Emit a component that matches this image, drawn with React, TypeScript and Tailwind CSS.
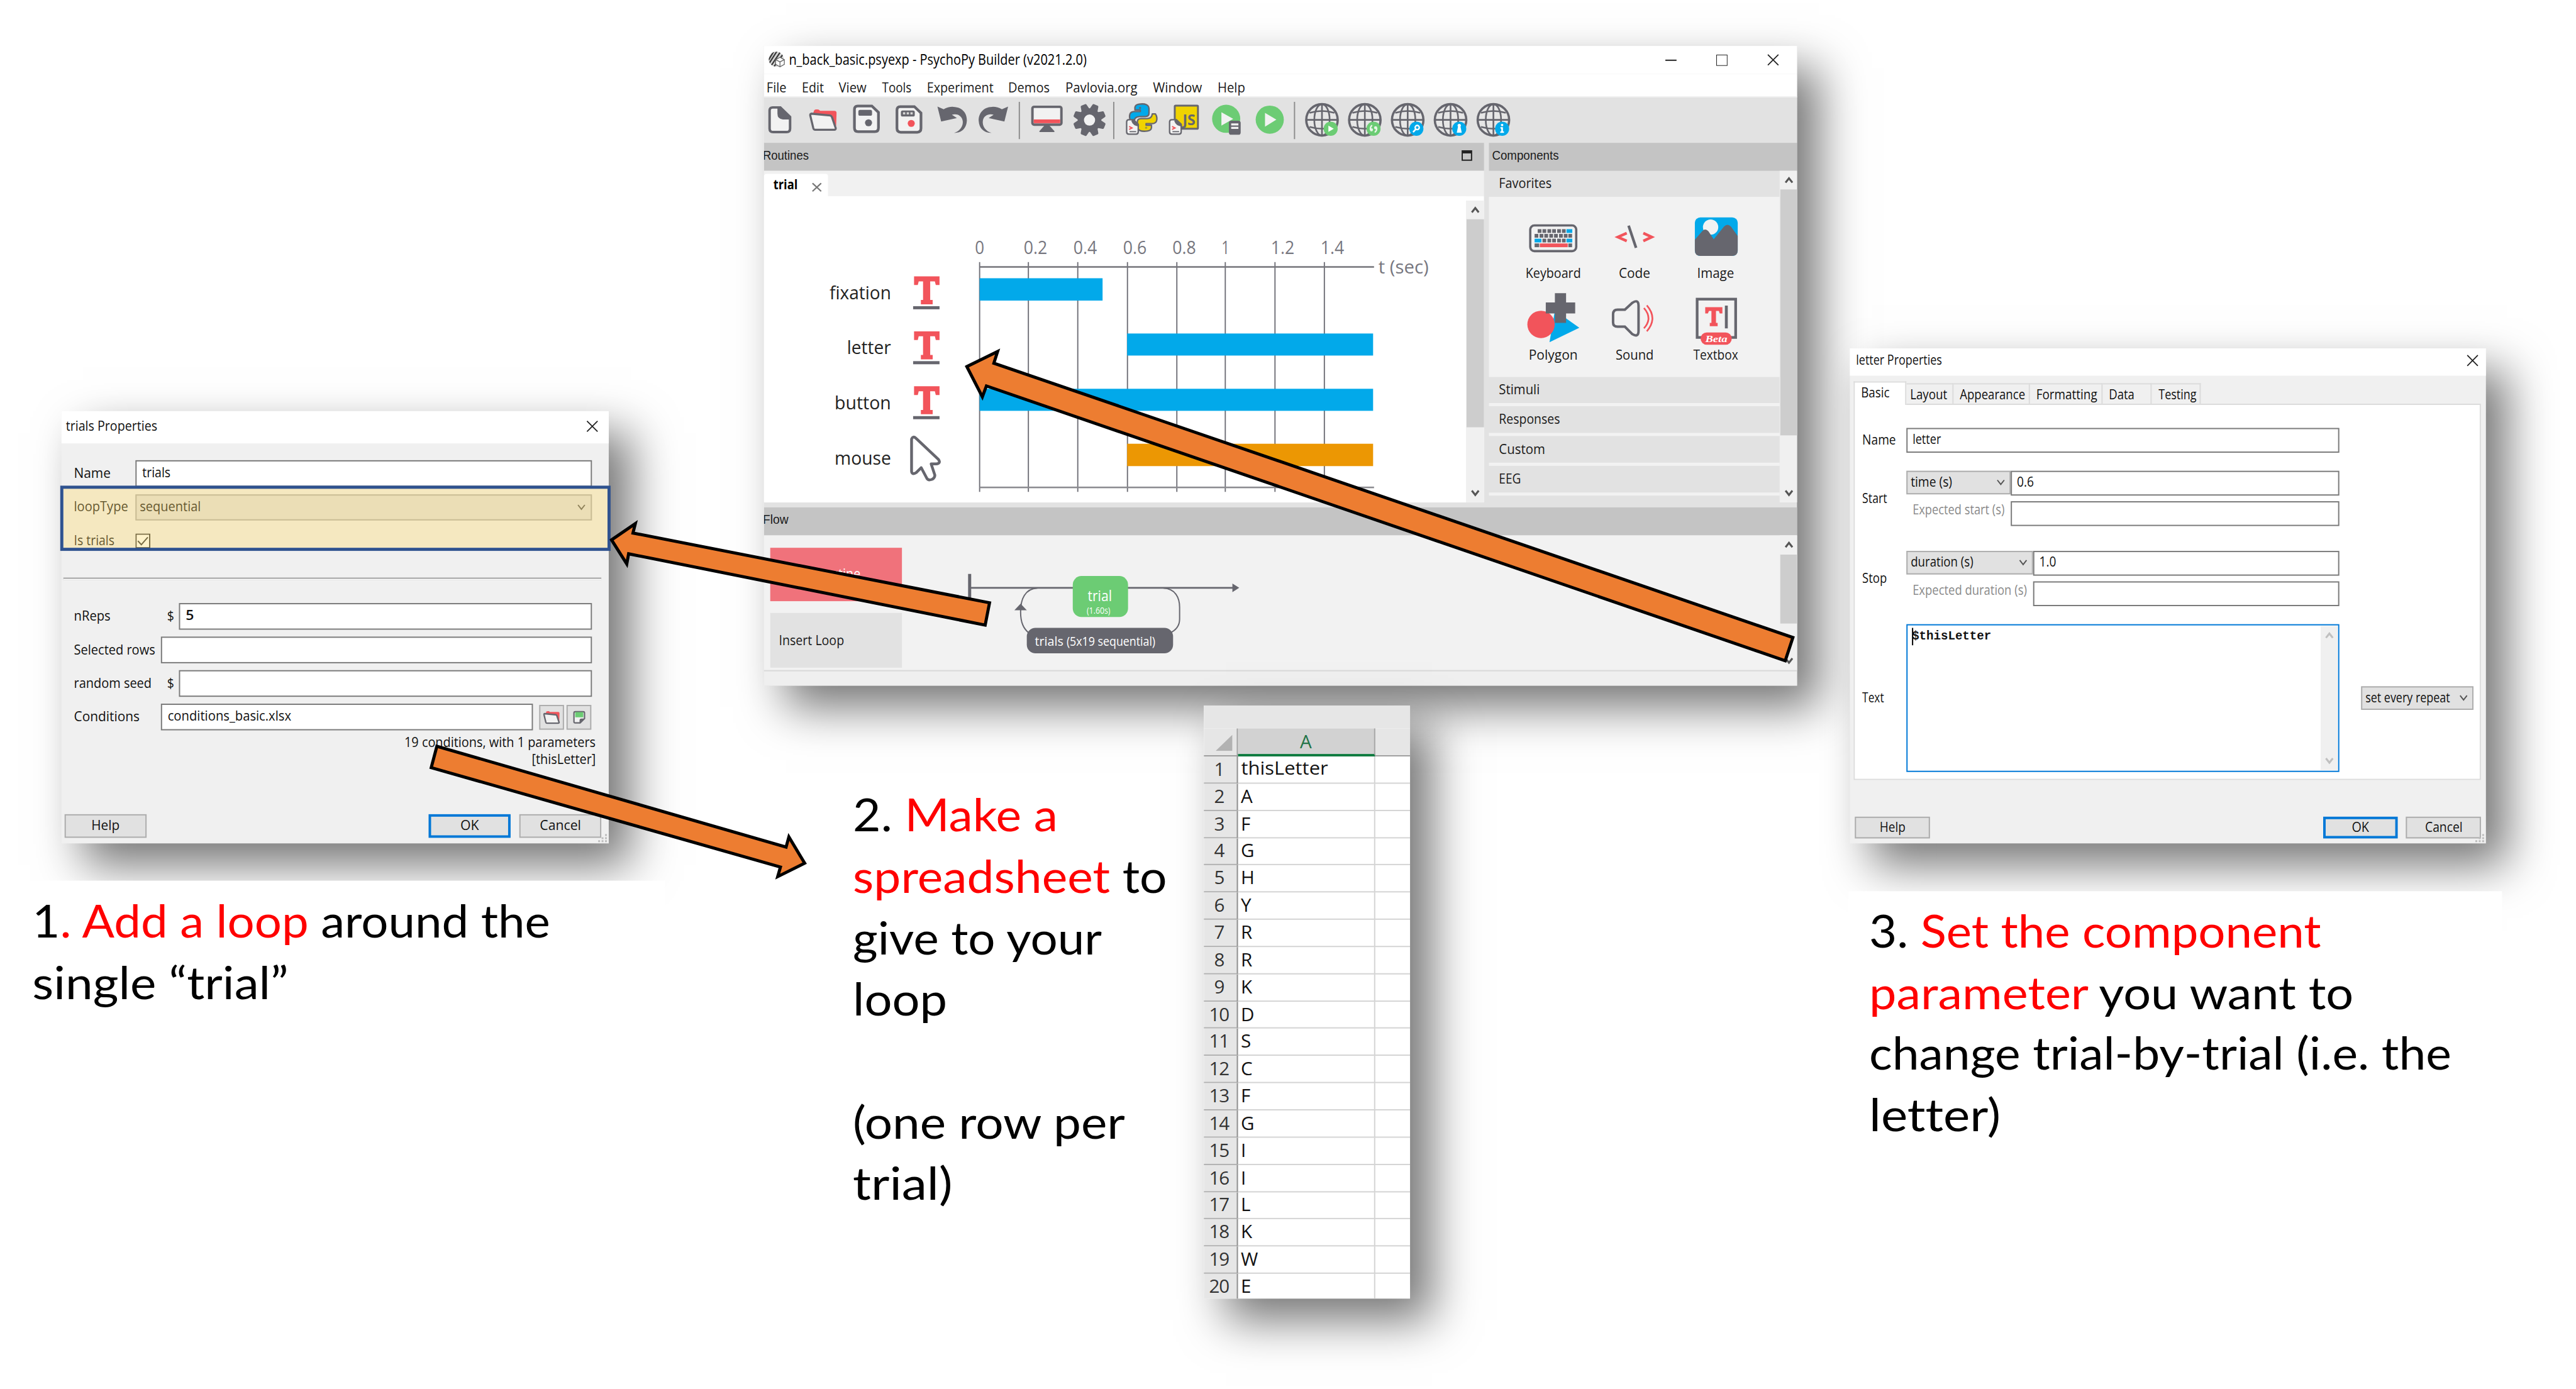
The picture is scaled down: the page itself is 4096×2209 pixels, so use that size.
import { useLayoutEffect, useRef, useState } from "react";
import type { ReactNode } from "react";

const DARK = "#66666e";
const RED = "#f2545b";
const BLUE = "#02a9ea";
const GREEN = "#6ccc74";
const PAPER = "#f2f2f2";
const YELLOW = "#f0d300";

/* Text whose glyphs are stretched or squeezed to an exact width. */
function Fit({ w, children, className = "" }: { w: number; children: ReactNode; className?: string }) {
  const ref = useRef<HTMLSpanElement>(null);
  const [k, setK] = useState(1);
  useLayoutEffect(() => {
    if (ref.current && ref.current.offsetWidth > 0) setK(w / ref.current.offsetWidth);
  }, [w]);
  return (
    <span className={"inline-block shrink-0 whitespace-pre " + className} style={{ width: w }}>
      <span ref={ref} className="inline-block origin-left whitespace-pre" style={{ transform: `translateY(-1.5px) scaleX(${k})` }}>
        {children}
      </span>
    </span>
  );
}

function CloseX() {
  return (
    <svg className="h-[19px] w-[19px]" viewBox="0 0 19 19">
      <path d="M1 1L18 18M18 1L1 18" stroke="#222" strokeWidth="1.8" fill="none" />
    </svg>
  );
}

function Chevron({ color = "#555", up = false, bold = false }: { color?: string; up?: boolean; bold?: boolean }) {
  return (
    <svg className="h-[12px] w-[14px] shrink-0" viewBox="0 0 14 12">
      <path
        d={up ? "M1.5 10L7 3L12.5 10" : "M1.5 2L7 9L12.5 2"}
        stroke={color}
        strokeWidth={bold ? 3.2 : 2}
        fill="none"
      />
    </svg>
  );
}

/* ---------- toolbar ---------- */

function ToolIcon({ x, oy = 6, children }: { x: number; oy?: number; children: ReactNode }) {
  return (
    <svg className="h-[73px] w-[69.2px] shrink-0" viewBox={`${x} ${oy} 207.6 219`}>
      {children}
    </svg>
  );
}

function Separator() {
  return (
    <div className="flex h-[60px] w-[14px] shrink-0 justify-center pr-[5px]">
      <div className="w-[2px] bg-[#8e8e8e]" />
    </div>
  );
}

function ScriptPage({ dx = 0 }: { dx?: number }) {
  return (
    <g transform={`translate(${dx} 0)`}>
      <path d="M293 113H315L338 135V172Q338 183 327 183H293Q282 183 282 172V124Q282 113 293 113Z" fill={PAPER} stroke={DARK} strokeWidth="7" />
      <path d="M310 110L342 138V146Q312 144 305 120Z" fill={DARK} />
      <path d="M294 146L308 153L294 160" fill="none" stroke={RED} strokeWidth="6" />
      <path d="M296 171H328" stroke={DARK} strokeWidth="5" />
    </g>
  );
}

function Globe({ n, badge, children }: { n: number; badge: string; children: ReactNode }) {
  return (
    <ToolIcon x={1121.4}>
      <g data-slot={n} fill="none" stroke={DARK}>
        <circle cx="1224" cy="114" r="76" strokeWidth="11" fill="#e6e6e6" />
        <ellipse cx="1224" cy="114" rx="37" ry="76" strokeWidth="8" />
        <path d="M1224 38V190M1148 114H1300" strokeWidth="8" />
        <path d="M1164 80Q1224 62 1284 80M1164 148Q1224 166 1284 148" strokeWidth="8" />
      </g>
      <circle cx="1266" cy="157" r="34" fill={badge} />
      {children}
    </ToolIcon>
  );
}

const PY = "M342 38Q389 32 390 60V82Q390 98 372 98H344Q320 99 318 121H303Q292 104 298 86Q302 75 318 74H348V66H322V54Q324 40 342 38Z";

function Toolbar() {
  const disk = "M452 287H520L552 318V392Q552 411 534 411H454Q436 411 436 392V304Q436 287 452 287Z";
  const undo =
    "M838 290L868 303Q890 290 915 291C960 292 982 325 980 360C978 395 955 418 918 417C945 410 964 385 960 358C956 333 932 322 908 329L932 345L856 362Z";
  return (
    <div className="flex h-[73px] items-center overflow-hidden bg-[#e2e2e2]">
      <div className="-ml-[8.6px] flex items-center">
        <ToolIcon x={-25.8} oy={246}>
          <path d="M43 294H80L127 340V396Q127 413 110 413H45Q28 413 28 396V309Q28 294 43 294Z" fill={PAPER} stroke={DARK} strokeWidth="12" />
          <path d="M66 290H82L132 338V352H92Q66 350 66 325Z" fill={DARK} />
        </ToolIcon>
        <ToolIcon x={181.8} oy={246}>
          <path d="M236 322L241 308Q244 302 262 304L270 310H338Q350 310 349 322L347 385L320 330Z" fill={RED} />
          <path d="M227 324L318 333Q324 334 327 341L345 394Q346 402 338 402H246Q239 402 237 395L222 333Q221 325 227 324Z" fill={PAPER} stroke={DARK} strokeWidth="10" />
        </ToolIcon>
        <ToolIcon x={389.4} oy={246}>
          <path d={disk} fill={PAPER} stroke={DARK} strokeWidth="13" />
          <rect x="455" y="306" width="66" height="28" rx="8" fill={DARK} />
          <circle cx="504" cy="368" r="17" fill={DARK} />
        </ToolIcon>
        <ToolIcon x={597} oy={246}>
          <path d={disk} transform="translate(206 3)" fill={PAPER} stroke={DARK} strokeWidth="13" />
          <rect x="661" y="309" width="67" height="29" rx="8" fill={DARK} />
          <path d="M671 317h11v11h-11zM689 317h11v11h-11zM707 317h11v11h-11z" fill="#d5d5d5" />
          <circle cx="711" cy="371" r="17" fill={RED} />
        </ToolIcon>
        <ToolIcon x={804.6} oy={246}>
          <path d={undo} fill={DARK} />
        </ToolIcon>
        <ToolIcon x={1012.2} oy={246}>
          <path d={undo} transform="translate(2018 0) scale(-1 1)" fill={DARK} />
        </ToolIcon>
        <Separator />
        <ToolIcon x={1261.8} oy={246}>
          <rect x="1295" y="291" width="140" height="86" rx="8" fill={PAPER} stroke={DARK} strokeWidth="12" />
          <rect x="1301" y="352" width="128" height="18" fill={RED} />
          <path d="M1354 380H1376L1401 408V413H1329V408Z" fill={DARK} />
        </ToolIcon>
        <ToolIcon x={-1}>
          <g fill={DARK}>
            <circle cx="101" cy="115" r="57" />
            {[22.5, 67.5, 112.5, 157.5, 202.5, 247.5, 292.5, 337.5].map((a) => (
              <path key={a} transform={`rotate(${a} 101 115)`} d="M80 68L86 40Q87 36 92 36H110Q115 36 116 40L122 68Z" />
            ))}
          </g>
          <circle cx="101" cy="115" r="27" fill={PAPER} />
        </ToolIcon>
        <Separator />
        <ToolIcon x={249.8}>
          <g stroke={DARK} strokeWidth="7" strokeLinejoin="round">
            <path d={PY} fill={BLUE} />
            <path d={PY} fill={YELLOW} transform="rotate(180 362 103)" />
          </g>
          <circle cx="347" cy="56" r="5" fill={DARK} />
          <circle cx="376" cy="152" r="5" fill="#a59a30" />
          <ScriptPage />
        </ToolIcon>
        <ToolIcon x={457.4}>
          <rect x="515" y="45" width="112" height="112" rx="4" fill={YELLOW} stroke={DARK} strokeWidth="9" />
          <text x="553" y="139" textLength="62" lengthAdjust="spacingAndGlyphs" fontFamily="Open Sans, sans-serif" fontWeight="700" fontSize="68" fill={DARK}>
            JS
          </text>
          <ScriptPage dx={208} />
        </ToolIcon>
        <ToolIcon x={665}>
          <circle cx="764" cy="109" r="68" fill={GREEN} />
          <path d="M741 77L798 109L741 142Z" fill={PAPER} />
          <rect x="777" y="118" width="57" height="68" rx="11" fill={DARK} />
          <path d="M788 131h35v10h-35zM788 148h35v10h-35z" fill={PAPER} />
        </ToolIcon>
        <ToolIcon x={872.6}>
          <circle cx="975" cy="113" r="68" fill={GREEN} />
          <path d="M952 80L1007 113L952 147Z" fill={PAPER} />
        </ToolIcon>
        <Separator />
        <Globe n={1} badge={GREEN}>
          <path d="M1255 142L1281 157L1255 172Z" fill="#fff" />
        </Globe>
        <Globe n={2} badge={GREEN}>
          <g fill="none" stroke="#e8f6e8" strokeWidth="7" strokeLinecap="round">
            <circle cx="1256" cy="162" r="4" />
            <path d="M1251 160Q1250 148 1257 142" />
            <circle cx="1276" cy="152" r="4" />
            <path d="M1281 154Q1282 166 1274 172" />
          </g>
        </Globe>
        <Globe n={3} badge={BLUE}>
          <circle cx="1270" cy="151" r="10" fill="none" stroke="#fff" strokeWidth="7" />
          <path d="M1262 160L1250 173" stroke="#fff" strokeWidth="8" />
        </Globe>
        <Globe n={4} badge={BLUE}>
          <circle cx="1266" cy="141" r="8" fill="#fff" />
          <path d="M1260 147H1272L1278 176H1254Z" fill="#fff" />
        </Globe>
        <Globe n={5} badge={BLUE}>
          <circle cx="1266" cy="139" r="6" fill="#fff" />
          <path d="M1258 149H1270V170H1275V177H1257V170H1262V156H1258Z" fill="#fff" />
        </Globe>
      </div>
    </div>
  );
}

/* ---------- scroll bars ---------- */

function ScrollBar({ top, thumb, className = "" }: { top: number; thumb: number; className?: string }) {
  return (
    <div className={"flex shrink-0 flex-col bg-[#f0f0f0] pl-[1px] " + className}>
      <div className="flex shrink-0 items-center justify-center" style={{ height: top }}>
        <Chevron up bold />
      </div>
      <div className="shrink-0 bg-[#cdcdcd]" style={{ height: thumb }} />
      <div className="flex flex-1 items-end justify-center pb-[9px]">
        <Chevron bold />
      </div>
    </div>
  );
}

/* ---------- routine time line ---------- */

const TICKS = [
  { x: 1577, tx: 1577, w: 15, t: "0" },
  { x: 1655.5, tx: 1667, w: 38, t: "0.2" },
  { x: 1735, tx: 1747, w: 38, t: "0.4" },
  { x: 1815, tx: 1827, w: 38, t: "0.6" },
  { x: 1894.5, tx: 1906.5, w: 38, t: "0.8" },
  { x: 1972.5, tx: 1973, w: 13, t: "1" },
  { x: 2052.5, tx: 2065, w: 38, t: "1.2" },
  { x: 2132, tx: 2145, w: 38, t: "1.4" },
];

const BARS = [
  { x: 1577, w: 198, y: 448, h: 36, c: BLUE },
  { x: 1814.5, w: 396, y: 537, h: 35.5, c: BLUE },
  { x: 1577, w: 633.5, y: 626, h: 35.5, c: BLUE },
  { x: 1814.5, w: 396, y: 714.5, h: 36, c: "#ec9703" },
];

const ROWS = [
  { t: "fixation", w: 99, y: 482 },
  { t: "letter", w: 71, y: 570.5 },
  { t: "button", w: 91, y: 659 },
  { t: "mouse", w: 91, y: 748 },
];

function TextGlyph({ y }: { y: number }) {
  return (
    <g transform={`translate(0 ${y})`}>
      <path d="M1471.500 0H1512.500V14H1506.500L1505 8H1497.500V38H1501.500V45H1482.500V38H1486V8H1479L1477.500 14H1471.500Z" fill={RED} />
      <rect x="1470" y="48" width="42.500" height="5" fill={DARK} />
    </g>
  );
}

function Timeline() {
  return (
    <svg className="h-[493px] w-[1130px] shrink-0 bg-white" viewBox="1230 316 1130 493" fontFamily="Open Sans, sans-serif">
      {TICKS.map((k) => (
        <g key={k.t}>
          <rect x={k.x - 0.9} y="422" width="1.900" height="370" fill="#6e6e76" />
          <text x={k.tx - k.w / 2} y="409.500" textLength={k.w} lengthAdjust="spacingAndGlyphs" fontSize="30" fill="#77777f">
            {k.t}
          </text>
        </g>
      ))}
      <rect x="1577" y="428.500" width="635" height="2.600" fill="#77777d" />
      <rect x="1577" y="783.500" width="635" height="2.600" fill="#8b8b90" />
      {BARS.map((b) => (
        <rect key={b.y} x={b.x} y={b.y} width={b.w} height={b.h} fill={b.c} />
      ))}
      <text x="2219" y="440.500" textLength="81" lengthAdjust="spacingAndGlyphs" fontSize="30" fill="#77777f">
        t (sec)
      </text>
      {ROWS.map((r) => (
        <text key={r.t} x={1434.5 - r.w} y={r.y} textLength={r.w} lengthAdjust="spacingAndGlyphs" fontSize="29.500" fill="#222">
          {r.t}
        </text>
      ))}
      <TextGlyph y={445} />
      <TextGlyph y={533.5} />
      <TextGlyph y={622} />
      <path
        d="M1467.500 707Q1470 701 1475 706L1511 740Q1515 746 1507 747L1499 747L1505 765Q1505 770 1500 772Q1494 774 1492 770L1483 753L1475 761Q1468 765 1467.500 759Z"
        fill="none"
        stroke={DARK}
        strokeWidth="4.500"
        strokeLinejoin="round"
      />
    </svg>
  );
}

/* ---------- component palette ---------- */

function Palette({ x, y, h, label, lw, lh, children }: { x: number; y: number; h: number; label: string; lw: number; lh: number; children: ReactNode }) {
  return (
    <div className="flex flex-col items-center">
      <svg className="w-[131px] shrink-0" viewBox={`${x} ${y} 393 ${h}`} style={{ height: h / 3 }}>
        {children}
      </svg>
      <div className="flex items-center text-[21.5px]" style={{ height: lh }}>
        <Fit w={lw}>{label}</Fit>
      </div>
    </div>
  );
}

function Key({ x, y, w = 18, c = DARK }: { x: number; y: number; w?: number; c?: string }) {
  return <rect x={x} y={y} width={w} height="18" fill={c} />;
}

function PaletteGrid() {
  return (
    <div className="grid h-[289.5px] w-[468px] grid-cols-[131px_131px_131px] content-start bg-[#f2f2f2] pl-[37.5px] pt-[26px]">
      <Palette x={13.5} y={9} h={231} label="Keyboard" lw={89} lh={42}>
        <rect x="99" y="69" width="222" height="124" rx="20" fill={PAPER} stroke={DARK} strokeWidth="11" />
        {[135, 158, 182, 205, 229, 252].map((k) => <Key key={k} x={k} y={87} />)}
        <Key x={274} y={87} w={28} c={BLUE} />
        {[120, 144, 167, 191, 214, 238, 261, 283].map((k) => <Key key={k} x={k} y={110} />)}
        <Key x={120} y={133} w={33} c={BLUE} />
        {[158, 182, 205, 229, 252].map((k) => <Key key={k} x={k} y={133} />)}
        <Key x={274} y={133} w={28} c={BLUE} />
        <Key x={120} y={156} w={22} />
        <Key x={145} y={156} w={135} c={RED} />
        <Key x={283} y={156} />
      </Palette>
      <Palette x={406.5} y={9} h={231} label="Code" lw={51} lh={42}>
        <path d="M565 106L522 125L565 144M645 106L686 125L645 144" fill="none" stroke={RED} strokeWidth="13" />
        <path d="M574 70L610 177" stroke={DARK} strokeWidth="13" />
      </Palette>
      <Palette x={799.5} y={9} h={231} label="Image" lw={60} lh={42}>
        <rect x="894" y="30" width="207" height="186" rx="26" fill={BLUE} />
        <circle cx="970" cy="77" r="37" fill={PAPER} />
        <path d="M894 138L930 96Q945 80 960 98L985 136L1035 74Q1052 58 1068 74L1101 120V190Q1101 216 1075 216H920Q894 216 894 190Z" fill={DARK} />
      </Palette>
      <Palette x={13.5} y={366} h={285} label="Polygon" lw={79} lh={32}>
        <path d="M218 480L336 563L192 633Z" fill={BLUE} />
        <circle cx="151" cy="547" r="66" fill={RED} />
        <path d="M218 396h54v45h44v53h-44v46h-54v-46h-44v-53h44z" fill={DARK} />
      </Palette>
      <Palette x={406.5} y={366} h={285} label="Sound" lw={61} lh={32}>
        <path d="M499 498Q499 476 521 476H556L592 443Q622 422 622 458V578Q622 612 592 594L556 558H521Q499 558 499 538Z" fill="none" stroke={DARK} strokeWidth="12" />
        <path d="M648 468Q692 518 648 566M662 455Q716 518 662 580" fill="none" stroke={RED} strokeWidth="8" />
      </Palette>
      <Palette x={799.5} y={366} h={285} label="Textbox" lw={72} lh={32}>
        <rect x="905" y="425" width="186" height="185" fill={PAPER} stroke={DARK} strokeWidth="13" />
        <path d="M944 464H1027V494H1014L1010 482H996V540H1004V556H966V540H974V482H962L957 494H944Z" fill={RED} />
        <path d="M1046 456V566" stroke={DARK} strokeWidth="14" />
        <rect x="922" y="586" width="150" height="59" rx="29" fill={RED} />
        <text x="944" y="632" textLength="107" lengthAdjust="spacingAndGlyphs" fontFamily="Liberation Serif, serif" fontStyle="italic" fontWeight="700" fontSize="46" fill="#fff">
          Beta
        </text>
      </Palette>
    </div>
  );
}

/* ---------- builder window ---------- */

const MENU: [string, number][] = [
  ["File", 32], ["Edit", 35], ["View", 45], ["Tools", 47], ["Experiment", 107],
  ["Demos", 67], ["Pavlovia.org", 116], ["Window", 79], ["Help", 45],
];

const GROUPS: [string, number][] = [["Stimuli", 66], ["Responses", 98], ["Custom", 74], ["EEG", 36]];

function BuilderWindow() {
  return (
    <div className="absolute left-[1230px] top-[74px] flex h-[1030px] w-[1663px] flex-col overflow-visible bg-[#e2e2e2] text-[21.5px] leading-none text-[#1a1a1a] shadow-[35px_35px_70px_rgba(0,0,0,0.54)]">
      <div className="flex h-[45px] shrink-0 items-center bg-white pl-[7px]">
        <svg className="h-[27px] w-[27px]" viewBox="22 24 81 81">
          <clipPath id="disc">
            <circle cx="60" cy="61" r="36" />
          </clipPath>
          <circle cx="60" cy="61" r="36" fill="#d6d6d6" />
          <g clipPath="url(#disc)" stroke="#3b3b3b" strokeWidth="7">
            <path d="M22 66L50 20M24 84L66 18M34 94L84 20M48 98L98 30" />
          </g>
          <path d="M78 52L99 63V86L78 98L57 86V63Z" fill="#fff" stroke="#666" strokeWidth="4" />
          <path d="M57 63L78 74L99 63M78 74V98" fill="none" stroke="#666" strokeWidth="4" />
        </svg>
        <Fit w={479} className="ml-[6px] mt-[2px] text-[23px] text-black">n_back_basic.psyexp - PsychoPy Builder (v2021.2.0)</Fit>
        <div className="ml-auto flex items-center gap-[64px] pr-[29px]">
          <div className="h-[2px] w-[18px] bg-[#222]" />
          <div className="h-[18px] w-[18px] border-[1.5px] border-[#222]" />
          <CloseX />
        </div>
      </div>
      <div className="flex h-[38px] shrink-0 items-center gap-[24.7px] border-b-[2px] border-[#f0f0f0] bg-white pl-[4px] pt-[9.5px]">
        {MENU.map(([t, w]) => (
          <Fit key={t} w={w}>{t}</Fit>
        ))}
      </div>
      <Toolbar />
      <div className="flex h-[579px] shrink-0">
        <div className="flex w-[1158.5px] flex-col">
          <div className="flex h-[44.5px] items-center justify-between overflow-hidden bg-[#c4c4c4] pr-[19px]">
            <Fit w={74} className="-ml-[2.5px] font-['Liberation_Sans'] text-[20px]">Routines</Fit>
            <div className="mt-[-3px] h-[17px] w-[17px] border-[2px] border-t-[5px] border-[#222]" />
          </div>
          <div className="flex h-[41.5px] items-end bg-[#f1f1f1]">
            <div className="flex h-[36px] w-[103px] items-center rounded-t-[4px] bg-white pl-[15px]">
              <Fit w={39} className="font-bold text-black">trial</Fit>
              <svg className="ml-[23px] mt-[7px] h-[15px] w-[16px]" viewBox="0 0 16 15">
                <path d="M1 1L15 14M15 1L1 14" stroke="#777" strokeWidth="2.2" />
              </svg>
            </div>
          </div>
          <div className="flex flex-1 bg-white">
            <Timeline />
            <ScrollBar top={30} thumb={335} className="mt-[6.5px] w-[28.5px]" />
          </div>
        </div>
        <div className="w-[8.5px] shrink-0" />
        <div className="flex flex-1 flex-col">
          <div className="flex h-[44.5px] shrink-0 items-center bg-[#c4c4c4] pl-[5px]">
            <Fit w={107} className="font-['Liberation_Sans'] text-[20px]">Components</Fit>
          </div>
          <div className="flex flex-1">
            <div className="flex w-[468px] flex-col">
              <div className="flex h-[42.5px] shrink-0 items-center pl-[16px]">
                <Fit w={85}>Favorites</Fit>
              </div>
              <PaletteGrid />
              {GROUPS.map(([t, w]) => (
                <div key={t} className="flex h-[47.8px] shrink-0 items-center border-b-[5px] border-[#f2f2f2] pl-[16px]">
                  <Fit w={w}>{t}</Fit>
                </div>
              ))}
            </div>
            <ScrollBar top={30.5} thumb={395.5} className="w-[28px]" />
          </div>
        </div>
      </div>
      <div className="mt-[8px] flex h-[45px] shrink-0 items-center overflow-hidden bg-[#c4c4c4] pb-[4px]">
        <Fit w={41} className="-ml-[2.5px] font-['Liberation_Sans'] text-[20px]">Flow</Fit>
      </div>
      <div className="flex h-[216.5px] shrink-0 bg-[#f2f2f2]">
        <div className="flex w-[222px] flex-col gap-[19px] pl-[10px] pt-[19.5px]">
          <div className="flex h-[86px] w-[212px] items-center bg-[#f0727b] pl-[14px] text-white">
            <Fit w={131}>Insert Routine</Fit>
          </div>
          <div className="flex h-[88px] w-[212px] items-center bg-[#e2e2e2] pl-[14px] pt-[2px]">
            <Fit w={105}>Insert Loop</Fit>
          </div>
        </div>
        <svg className="h-[216px] w-[600px] shrink-0" viewBox="1452 862 600 216" fontFamily="Open Sans, sans-serif">
          <g fill="none" stroke={DARK}>
            <path d="M1561 924V968" strokeWidth="5" />
            <path d="M1563 946.500H1985" strokeWidth="2.600" />
            <path d="M1670 947C1650 948 1643 965 1643 985C1643 1003 1648 1012 1656 1019" strokeWidth="2" />
            <path d="M1873 947C1892 948 1899 962 1899 978V997C1899 1008 1892 1015 1884 1019" strokeWidth="2" />
          </g>
          <path d="M1984 939.500L1995 946.500L1984 953.500ZM1633 982.500L1643 972L1653 982.500Z" fill={DARK} />
          <rect x="1727" y="927.500" width="89" height="66" rx="14" fill={GREEN} />
          <rect x="1653" y="1011" width="235.500" height="41" rx="14" fill={DARK} />
          <g fill="#fff">
            <text x="1751" y="967.500" fontSize="23" textLength="39" lengthAdjust="spacingAndGlyphs">trial</text>
            <text x="1749.500" y="988" fontSize="14.500" textLength="38" lengthAdjust="spacingAndGlyphs">(1.60s)</text>
            <text x="1666" y="1039.500" fontSize="20" textLength="46" lengthAdjust="spacingAndGlyphs">trials</text>
            <text x="1717" y="1039.500" fontSize="20" textLength="143" lengthAdjust="spacingAndGlyphs">(5x19 sequential)</text>
          </g>
        </svg>
        <div className="flex-1" />
        <ScrollBar top={30.5} thumb={111.5} className="w-[28px]" />
      </div>
      <div className="flex-1 border-t-[2px] border-[#d9d9d9] bg-[#efefef]" />
    </div>
  );
}

/* ---------- dialog parts ---------- */

function Button({ w, tw, children, primary = false, className = "" }: { w: number; tw: number; children: ReactNode; primary?: boolean; className?: string }) {
  return (
    <div
      className={
        "flex shrink-0 items-center justify-center bg-[#e1e1e1] " +
        (primary ? "border-[4px] border-[#0078d7] " : "border-[2px] border-[#adadad] ") +
        className
      }
      style={{ width: w }}
    >
      <Fit w={tw}>{children}</Fit>
    </div>
  );
}

function Field({ w, children }: { w: number; children?: ReactNode }) {
  return (
    <div className="flex h-[43px] shrink-0 items-center border-[2px] border-[#7a7a7a] bg-white pb-[2px] pl-[9px]" style={{ width: w }}>
      {children}
    </div>
  );
}

function Grip() {
  return (
    <svg className="absolute bottom-0 right-0 h-[18px] w-[20px]" viewBox="0 0 20 18">
      <path d="M3 13h3v3h-3zM8.500 13h3v3h-3zM14 13h3v3h-3zM8.500 8h3v3h-3zM14 8h3v3h-3zM14 3h3v3h-3z" fill="#bdbdbd" />
    </svg>
  );
}

function FormRow({ label, lw, col, dollar = false, children }: { label: string; lw: number; col: number; dollar?: boolean; children: ReactNode }) {
  return (
    <div className="flex h-[54px] shrink-0 items-center pl-[20px]">
      <div className="flex shrink-0 justify-between" style={{ width: col }}>
        <Fit w={lw}>{label}</Fit>
        {dollar && <span className="pr-[8px]"><Fit w={11}>$</Fit></span>}
      </div>
      {children}
    </div>
  );
}

function TrialsDialog() {
  return (
    <div className="absolute left-[99px] top-[662px] flex h-[696px] w-[881px] flex-col bg-[#f0f0f0] text-[21.5px] leading-none text-[#111] shadow-[35px_35px_70px_rgba(0,0,0,0.54)]">
      <div className="flex h-[52px] shrink-0 items-center justify-between bg-white pb-[3px] pl-[7px] pr-[17px]">
        <Fit w={147}>trials Properties</Fit>
        <CloseX />
      </div>
      <div className="h-[21.5px] shrink-0" />
      <FormRow label="Name" lw={59} col={99}>
        <Field w={735}><Fit w={46}>trials</Fit></Field>
      </FormRow>
      <FormRow label="loopType" lw={87} col={99}>
        <div className="flex h-[42px] w-[735px] items-center justify-between border-[2px] border-[#adadad] bg-[#e1e1e1] pl-[5px] pr-[8px]">
          <Fit w={98}>sequential</Fit>
          <Chevron />
        </div>
      </FormRow>
      <FormRow label="Is trials" lw={65} col={99}>
        <svg className="h-[24px] w-[24px]" viewBox="0 0 24 24">
          <rect x="1" y="1" width="22" height="22" fill="#fff" stroke="#333" strokeWidth="2" />
          <path d="M4 12L9.500 18L20 6" fill="none" stroke="#333" strokeWidth="2" />
        </svg>
      </FormRow>
      <div className="ml-[3px] mt-[32px] h-[4px] w-[866px] shrink-0 border-b-[2px] border-white bg-[#a0a0a0]" />
      <div className="h-[32px] shrink-0" />
      <FormRow label="nReps" lw={59} col={169} dollar>
        <Field w={665}><Fit w={13} className="font-semibold">5</Fit></Field>
      </FormRow>
      <FormRow label="Selected rows" lw={131} col={140}>
        <Field w={694} />
      </FormRow>
      <FormRow label="random seed" lw={125} col={169} dollar>
        <Field w={665} />
      </FormRow>
      <FormRow label="Conditions" lw={106} col={140}>
        <Field w={599}><Fit w={199}>conditions_basic.xlsx</Fit></Field>
        <div className="ml-[10px] flex h-[40px] w-[40px] items-center justify-center border-[2px] border-[#adadad] bg-[#e1e1e1]">
          <svg className="h-[22px] w-[28px]" viewBox="214 298 140 112">
            <path d="M236 322L241 308Q244 302 262 304L270 310H338Q350 310 349 322L347 385L320 330Z" fill={RED} />
            <path d="M227 324L318 333Q324 334 327 341L345 394Q346 402 338 402H246Q239 402 237 395L222 333Q221 325 227 324Z" fill={PAPER} stroke={DARK} strokeWidth="12" />
          </svg>
        </div>
        <div className="ml-[4px] flex h-[40px] w-[40px] items-center justify-center border-[2px] border-[#adadad] bg-[#e1e1e1]">
          <svg className="h-[22px] w-[21px]" viewBox="0 0 21 22">
            <path d="M4 2H17Q19 2 19 4V13L12 20H4Q2 20 2 18V4Q2 2 4 2Z" fill={PAPER} stroke={DARK} strokeWidth="2.200" />
            <path d="M4 2.500H17V11H4Z" fill={GREEN} />
            <path d="M11 21V16Q11 13 14 13H20Z" fill={DARK} />
          </svg>
        </div>
      </FormRow>
      <div className="flex shrink-0 flex-col items-end pr-[21px]">
        <div className="flex h-[28px] items-center"><Fit w={308}>19 conditions, with 1 parameters</Fit></div>
        <div className="flex h-[28px] items-center"><Fit w={103}>[thisLetter]</Fit></div>
      </div>
      <div className="mt-auto flex h-[47px] shrink-0 items-start pl-[5px]">
        <Button w={132} tw={46} className="h-[38px]">Help</Button>
        <Button w={132} tw={30} primary className="ml-[454px] h-[38px]">OK</Button>
        <Button w={132} tw={66} className="ml-[14px] h-[38px]">Cancel</Button>
      </div>
      <Grip />
    </div>
  );
}

const TABS: { t: string; w: number; tw: number; pl: number }[] = [
  { t: "Layout", w: 76, tw: 60, pl: 6 },
  { t: "Appearance", w: 123, tw: 105, pl: 10 },
  { t: "Formatting", w: 117, tw: 98, pl: 10 },
  { t: "Data", w: 79, tw: 41, pl: 10 },
  { t: "Testing", w: 79, tw: 61, pl: 11 },
];

function Select({ w, h, tw, children, pr = 7 }: { w: number; h: number; tw: number; children: ReactNode; pr?: number }) {
  return (
    <div className="flex shrink-0 items-center justify-between border-[2px] border-[#adadad] bg-[#e1e1e1] pl-[5px]" style={{ width: w, height: h, paddingRight: pr }}>
      <Fit w={tw}>{children}</Fit>
      <Chevron />
    </div>
  );
}

function TimeRow({ label, lw, first, fw, value, vw, note, nw, sw }: { label: string; lw: number; first: string; fw: number; value: string; vw: number; note: string; nw: number; sw: number }) {
  return (
    <div className="flex h-[89px] shrink-0 items-center">
      <div className="w-[70.5px] shrink-0"><Fit w={lw}>{label}</Fit></div>
      <div className="flex h-[89px] w-[697.5px] flex-col justify-between">
        <div className="flex items-start">
          <Select w={sw} h={38} tw={fw}>{first}</Select>
          <div className="flex h-[40px] flex-1 items-center border-[2px] border-[#7a7a7a] bg-white pb-[2px] pl-[8px]">
            <Fit w={vw}>{value}</Fit>
          </div>
        </div>
        <div className="flex items-start">
          <div className="flex h-[29px] items-center pl-[10px] text-[#8a8a8a]" style={{ width: sw }}>
            <Fit w={nw}>{note}</Fit>
          </div>
          <div className="h-[40px] flex-1 border-[2px] border-[#7a7a7a] bg-white" />
        </div>
      </div>
    </div>
  );
}

function LetterDialog() {
  return (
    <div className="absolute left-[2977.5px] top-[561px] flex h-[797px] w-[1024px] flex-col bg-[#f0f0f0] text-[21.5px] leading-none text-[#111] shadow-[35px_35px_70px_rgba(0,0,0,0.54)]">
      <div className="flex h-[44px] shrink-0 items-center justify-between bg-white pb-[5px] pl-[10px] pr-[12px]">
        <Fit w={138}>letter Properties</Fit>
        <CloseX />
      </div>
      <div className="flex h-[45px] shrink-0 items-end pl-[6px]">
        <div className="relative -mb-[2px] flex h-[38px] w-[85px] items-center border-[2px] border-b-0 border-[#dcdcdc] bg-white pb-[2px] pl-[10.5px]">
          <Fit w={46}>Basic</Fit>
        </div>
        {TABS.map((t) => (
          <div key={t.t} className="flex h-[33px] items-center border-r-[2px] border-t-[2px] border-[#dcdcdc] pt-[2px]" style={{ width: t.w, paddingLeft: t.pl }}>
            <Fit w={t.tw}>{t.t}</Fit>
          </div>
        ))}
      </div>
      <div className="ml-[6px] flex h-[606px] w-[1010px] shrink-0 flex-col border-[2px] border-[#dcdcdc] bg-white pl-[12.5px] pt-[37px]">
        <div className="flex h-[40px] shrink-0 items-center">
          <div className="w-[70.5px] shrink-0"><Fit w={54}>Name</Fit></div>
          <div className="flex h-[40px] w-[697.5px] items-center border-[2px] border-[#7a7a7a] pb-[2px] pl-[8px]">
            <Fit w={46}>letter</Fit>
          </div>
        </div>
        <div className="h-[29px] shrink-0" />
        <TimeRow label="Start" lw={40} first="time (s)" fw={67} value="0.6" vw={27} note="Expected start (s)" nw={148} sw={168.5} />
        <div className="h-[40px] shrink-0" />
        <TimeRow label="Stop" lw={40} first="duration (s)" fw={101} value="1.0" vw={27} note="Expected duration (s)" nw={184} sw={204.5} />
        <div className="h-[29px] shrink-0" />
        <div className="flex h-[238px] shrink-0 items-center">
          <div className="w-[70.5px] shrink-0"><Fit w={35}>Text</Fit></div>
          <div className="flex h-[238px] w-[697.5px] justify-between border-[2px] border-[#0078d7] p-[1px]">
            <div className="flex h-[34px] items-center pl-[6px]">
              <div className="h-[28px] w-[2px] bg-black" />
              <Fit w={128} className="-ml-[2px] font-['Liberation_Mono'] text-[21px] font-bold">$thisLetter</Fit>
            </div>
            <div className="flex w-[27px] flex-col items-center justify-between bg-[#f0f0f0] py-[9px]">
              <Chevron up color="#c0c0c0" bold />
              <Chevron color="#c0c0c0" bold />
            </div>
          </div>
          <div className="ml-[34.5px]">
            <Select w={181} h={38} tw={136}>set every repeat</Select>
          </div>
        </div>
      </div>
      <div className="mt-auto flex h-[43px] shrink-0 items-start pl-[8.5px]">
        <Button w={121} tw={42} className="h-[35px]">Help</Button>
        <Button w={120} tw={28} primary className="ml-[633px] h-[35px]">OK</Button>
        <Button w={121} tw={60} className="ml-[13px] h-[35px]">Cancel</Button>
      </div>
      <Grip />
    </div>
  );
}

/* ---------- spreadsheet ---------- */

const CELLS = ["thisLetter", "A", "F", "G", "H", "Y", "R", "R", "K", "D", "S", "C", "F", "G", "I", "I", "L", "K", "W", "E"];

function Sheet() {
  return (
    <div className="absolute left-[1937.5px] top-[1136px] flex h-[955px] w-[332.5px] flex-col overflow-hidden bg-white text-[30px] leading-none text-[#111]">
      <div className="h-[37px] shrink-0 bg-[#e6e6e6]" />
      <div className="flex h-[45px] shrink-0 bg-[#e6e6e6]">
        <div className="flex w-[55px] items-end justify-end border-b-[2px] border-r-[2px] border-[#9f9f9f] pb-[7px] pr-[7px]">
          <svg className="h-[26px] w-[27px]" viewBox="0 0 27 26">
            <path d="M27 0V26H0Z" fill="#b2b2b2" />
          </svg>
        </div>
        <div className="flex w-[221.5px] items-center justify-center border-b-[4px] border-r-[2px] border-b-[#107c41] border-r-[#a8a8a8] bg-[#d2d2d2] text-[#217346]">A</div>
        <div className="flex-1 border-b-[2px] border-[#9f9f9f]" />
      </div>
      {CELLS.map((c, i) => (
        <div key={i} className="flex h-[43.85px] shrink-0">
          <div className="flex w-[55px] shrink-0 items-center justify-center border-b-[2px] border-r-[2px] border-b-[#b0b0b0] border-r-[#8f8f8f] bg-[#e6e6e6] pb-[2px] pr-[3px] tracking-[-0.04em] text-[#333]">
            {i + 1}
          </div>
          <div className="flex w-[221.5px] shrink-0 items-center border-b-[2px] border-r-[2px] border-[#d4d4d4] pb-[2px] pl-[5px]">
            {i === 0 ? <Fit w={140}>{c}</Fit> : c}
          </div>
          <div className="flex-1 border-b-[2px] border-[#d4d4d4]" />
        </div>
      ))}
    </div>
  );
}

/* ---------- slide ---------- */

function Red({ children }: { children: ReactNode }) {
  return <span className="text-[#ff0000]">{children}</span>;
}

export default function App() {
  return (
    <div className="h-[2209px] w-[4096px] overflow-hidden bg-white">
      <div className="relative h-[2236px] w-[4147px] origin-top-left scale-[0.9877] overflow-hidden bg-white font-['Open_Sans',sans-serif] [font-variant-ligatures:none]">
        <BuilderWindow />
        <TrialsDialog />
        <LetterDialog />

        <div className="absolute left-[1937.5px] top-[1136px] h-[955px] w-[332.5px] shadow-[35px_35px_70px_rgba(0,0,0,0.54)]" />
        <Sheet />

        <div className="absolute left-[20px] top-[1418px] flex w-[1050px] flex-col items-start bg-white pb-[20px] pl-[32px] pt-[16px] font-['Lato'] text-[73px] leading-[98.7px] text-black">
          <Fit w={834}>1<Red>. Add a loop</Red> around the</Fit>
          <Fit w={412}>single “trial”</Fit>
        </div>

        <div className="absolute left-[1373px] top-[1263px] flex w-[520px] flex-col items-start font-['Lato'] text-[73px] leading-[98.9px] text-black">
          <Fit w={330}>2. <Red>Make a</Red></Fit>
          <Fit w={506}><Red>spreadsheet</Red> to</Fit>
          <Fit w={401}>give to your</Fit>
          <Fit w={152}>loop</Fit>
          <div className="h-[98.9px]" />
          <Fit w={438}>(one row per</Fit>
          <Fit w={160}>trial)</Fit>
        </div>

        <div className="absolute left-[2976px] top-[1435px] flex w-[1052px] flex-col items-start bg-white pb-[20px] pl-[33px] pt-[15px] font-['Lato'] text-[73px] leading-[98.7px] text-black">
          <Fit w={728}>3. <Red>Set the component</Red></Fit>
          <Fit w={780}><Red>parameter</Red> you want to</Fit>
          <Fit w={937}>change trial-by-trial (i.e. the</Fit>
          <Fit w={212}>letter)</Fit>
        </div>

        <div className="absolute left-[97px] top-[782px] h-[105px] w-[886px] border-[5px] border-[#2f528f] bg-[rgba(255,217,102,0.35)] bg-clip-padding" />

        <svg className="pointer-events-none absolute inset-0 h-[2236px] w-[4147px]" viewBox="0 0 4147 2236">
          <g fill="#ed7d31" stroke="#000" strokeWidth="5" strokeLinejoin="miter">
            <path d="M1556.500 590.300L1606 566L1600 584.800L2886.300 1026.500L2874 1063.900L1588 621.400L1581.500 639Z" />
            <path d="M984.500 869.300L1022.800 843L1019 858.300L1593 970.600L1586 1006.500L1012 891.700L1009 908Z" />
            <path d="M703.300 1201.600L694.200 1236L1256.400 1396L1252 1411.500L1295.400 1389.900L1270 1347.500L1265.500 1363.900Z" />
          </g>
        </svg>
      </div>
    </div>
  );
}
